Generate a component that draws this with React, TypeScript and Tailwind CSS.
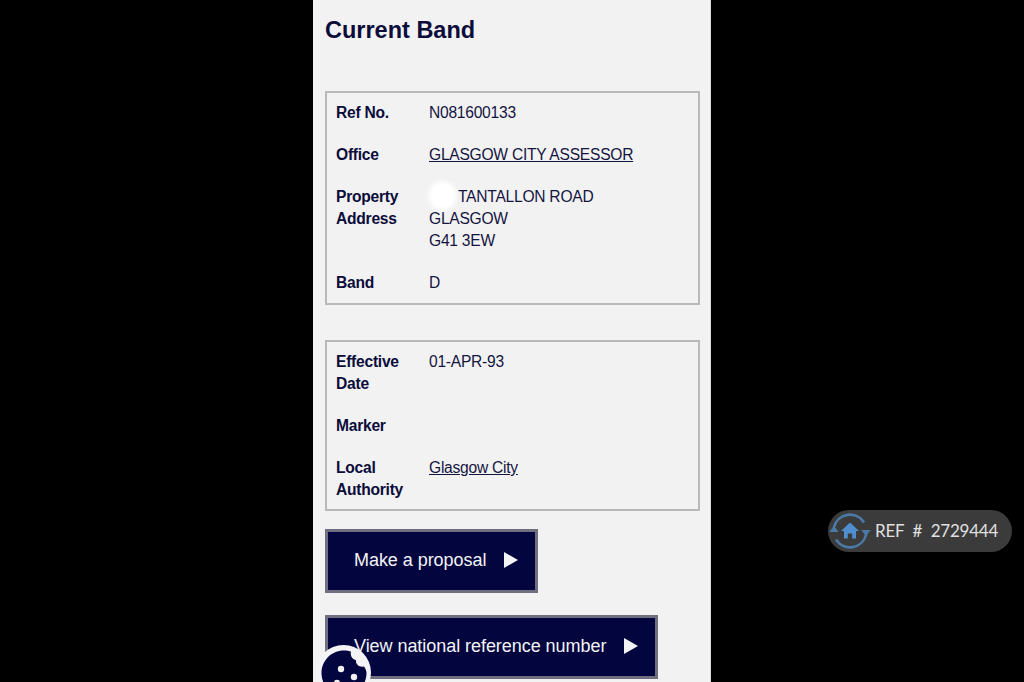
import React from 'react';

function Row({ label, children, rowClass = '' }: { label: React.ReactNode; children?: React.ReactNode; rowClass?: string }) {
  return (
    <div className={`grid grid-cols-[93px_1fr] ${rowClass}`}>
      <div className="font-bold">{label}</div>
      <div className="text-[#14153f]">{children}</div>
    </div>
  );
}

function Arrow() {
  return (
    <svg width="14" height="16" viewBox="0 0 14 16" className="shrink-0">
      <path d="M0 0 L14 8 L0 16 Z" fill="#f4f4f6" />
    </svg>
  );
}

function CookieBadge() {
  return (
    <div className="absolute left-[316px] top-[645px] w-[55px] h-[55px] rounded-full bg-[#f4f4f6] flex items-center justify-center">
      <svg width="46" height="46" viewBox="0 0 46 46">
        <path
          d="M23 0.5 C26 0.5 28 1 30 1.5 C29 5.5 31 9.5 35 10 C34.5 14.5 38 17.5 43 16.5 C44.5 18.5 45.5 21 45.5 23 C45.5 35.5 35.5 45.5 23 45.5 C10.5 45.5 0.5 35.5 0.5 23 C0.5 10.5 10.5 0.5 23 0.5 Z"
          fill="#03053f"
        />
        <circle cx="20" cy="19" r="3.2" fill="#f2f2f4" />
        <circle cx="33" cy="27" r="3.2" fill="#f2f2f4" />
        <circle cx="16" cy="33" r="3.2" fill="#f2f2f4" />
      </svg>
    </div>
  );
}

function RefBadge() {
  return (
    <div className="absolute left-[828px] top-[510px] w-[184px] h-[42px] rounded-full bg-[#3b3b3b] flex items-center">
      <svg width="44" height="44" viewBox="0 0 44 44" className="shrink-0">
        <path d="M6 18 A16.5 16.5 0 0 1 36 13.5" fill="none" stroke="#4a7ba8" strokeWidth="2.6" />
        <path d="M38 26 A16.5 16.5 0 0 1 8 30.5" fill="none" stroke="#4a7ba8" strokeWidth="2.6" />
        <path d="M1.5 23 L6 16.5 L10.5 23 Z" fill="#4a7ba8" />
        <path d="M33.5 21 L38 27.5 L42.5 21 Z" fill="#4a7ba8" />
        <path d="M22 13.5 L31 22 L28 22 L28 29.5 L24.2 29.5 L24.2 24.5 L19.8 24.5 L19.8 29.5 L16 29.5 L16 22 L13 22 Z" fill="#4f8fd0" />
      </svg>
      <span className="ml-[3px] text-[17px] [word-spacing:4.5px] text-[#e0e0e0] font-['Lato',sans-serif] whitespace-nowrap">REF # 2729444</span>
    </div>
  );
}

export default function App() {
  return (
    <div className="relative w-[1024px] h-[682px] overflow-hidden bg-black font-['Liberation_Sans',Arial,sans-serif] text-[15.6px] tracking-[-0.25px] leading-[22px] text-[#0b0c3a]">
      <div className="ml-[313px] w-[398px] h-full bg-[#f2f2f3] border-r border-[#d9d9da] px-3">
        <h1 className="pt-[15px] h-[91px] text-[23.5px] tracking-normal leading-[30px] font-bold text-[#0b0c3a]">Current Band</h1>

        <div className="w-[375px] border-2 border-[#b9b9bb] pl-[9px] pr-2 py-[9px] flex flex-col gap-5">
          <Row label="Ref No.">N081600133</Row>
          <Row label="Office">
            <span className="underline">GLASGOW CITY ASSESSOR</span>
          </Row>
          <Row label={<>Property<br />Address</>}>
            <span className="relative">
              <span className="absolute left-0 top-[-7px] w-[27px] h-[29px] rounded-full bg-white blur-[2px]" />
              <span className="ml-[29px]">TANTALLON ROAD</span>
            </span>
            <br />
            GLASGOW
            <br />
            G41 3EW
          </Row>
          <Row label="Band">D</Row>
        </div>

        <div className="w-[375px] mt-[35px] border-2 border-[#b9b9bb] pl-[9px] pr-2 pt-[9px] pb-2 flex flex-col gap-5">
          <Row label={<>Effective<br />Date</>}>01-APR-93</Row>
          <Row label="Marker" />
          <Row label={<>Local<br />Authority</>}>
            <span className="underline">Glasgow City</span>
          </Row>
        </div>

        <div className="mt-[18px] flex flex-col items-start gap-[22px]">
          <button className="h-[64px] w-[213px] pl-[26px] pb-[2px] border-[3px] border-[#6f6f7f] bg-[#03053f] text-[#f4f4f6] text-[18px] tracking-[-0.05px] flex items-center gap-[18px]">
            Make a proposal
            <Arrow />
          </button>
          <button className="h-[64px] w-[333px] pl-[26px] pb-[2px] border-[3px] border-[#6f6f7f] bg-[#03053f] text-[#f4f4f6] text-[18px] tracking-[-0.05px] flex items-center gap-[18px]">
            View national reference number
            <Arrow />
          </button>
        </div>
      </div>

      <CookieBadge />
      <RefBadge />
    </div>
  );
}
